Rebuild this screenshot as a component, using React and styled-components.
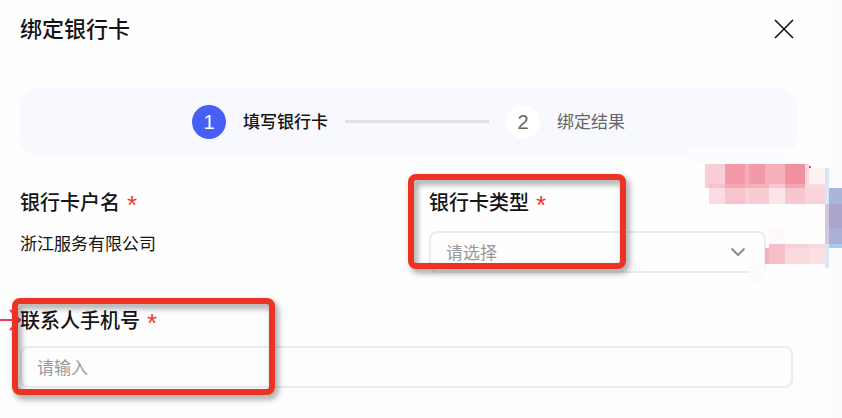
import styled, { createGlobalStyle } from "styled-components";

const mosaic = [
  // washed-out patch over the banner corner
  [689, 148, 96, 16, "#fbfcfe"],
  [785, 148, 24, 16, "#fdfdfe"],
  // upper row
  [705, 164, 20, 24, "#f9ced6"],
  [725, 164, 20, 20, "#f39aaa"],
  [745, 164, 4, 20, "#f5adb9"],
  [749, 164, 16, 20, "#f39aaa"],
  [765, 164, 20, 20, "#f5b1bc"],
  [785, 164, 20, 20, "#f28fa1"],
  [805, 164, 4, 20, "#fad6dc"],
  [809, 168, 16, 16, "#fef1f3"],
  [809, 166, 2, 2, "#d8506a"],
  [709, 184, 16, 4, "#f7c4cd"],
  [725, 184, 20, 4, "#f4a8b5"],
  [745, 184, 24, 4, "#f5b3be"],
  [769, 184, 16, 4, "#f8c6ce"],
  [785, 184, 20, 4, "#f4a6b4"],
  [805, 184, 20, 4, "#fad9de"],
  // middle row
  [709, 188, 16, 16, "#fbdbe1"],
  [725, 188, 20, 16, "#f7c3cd"],
  [745, 188, 4, 16, "#fad3da"],
  [749, 188, 20, 16, "#f9ccd4"],
  [769, 188, 16, 16, "#fce6e9"],
  [785, 188, 20, 16, "#f8c6cf"],
  [805, 188, 20, 16, "#f9d3da"],
  // lower row
  [769, 228, 16, 16, "#fdf9fa"],
  [765, 248, 4, 16, "#f4b1bd"],
  [769, 244, 16, 20, "#f6bec8"],
  [785, 244, 24, 4, "#f9cfd6"],
  [785, 248, 24, 16, "#fad9df"],
  [809, 244, 16, 4, "#fad7dd"],
  [809, 248, 16, 16, "#fbe0e4"],
  [749, 264, 16, 20, "#fcfcfc"],
  // blue column
  [825, 168, 4, 36, "#d6e8f8"],
  [825, 204, 4, 40, "#d4c6de"],
  [825, 244, 4, 24, "#d6e8f8"],
  [829, 188, 13, 16, "#aab5db"],
  [829, 204, 13, 24, "#a9a5cd"],
  [829, 228, 13, 16, "#a9b1da"],
  [829, 244, 13, 4, "#a9cbf0"],
];

export default function App() {
  return (
    <>
      <GlobalStyle />
      <Page>
        <Dialog>
          <Header>
            <Title>绑定银行卡</Title>
            <CloseButton type="button" aria-label="关闭">
              <svg width="20" height="20" viewBox="0 0 20 20">
                <path
                  d="M1 1L19 19M19 1L1 19"
                  fill="none"
                  stroke="currentColor"
                  strokeWidth="1.6"
                />
              </svg>
            </CloseButton>
          </Header>

          <Steps>
            <Step $active>
              <StepNumber $active>1</StepNumber>
              <StepText>填写银行卡</StepText>
            </Step>
            <StepLine aria-hidden="true" />
            <Step>
              <StepNumber>2</StepNumber>
              <StepText>绑定结果</StepText>
            </Step>
          </Steps>

          <Form>
            <Columns>
              <Field $gap={17}>
                <Label as="div">
                  银行卡户名 <Required>*</Required>
                </Label>
                <Value>浙江服务有限公司</Value>
              </Field>
              <Field $gap={17}>
                <Label htmlFor="cardType">
                  银行卡类型 <Required>*</Required>
                </Label>
                <SelectWrapper>
                  <Select id="cardType" defaultValue="">
                    <option value="">请选择</option>
                  </Select>
                  <Chevron viewBox="0 0 16 10">
                    <path
                      d="M1.5 1.5L8 8L14.5 1.5"
                      fill="none"
                      stroke="currentColor"
                      strokeWidth="2"
                    />
                  </Chevron>
                </SelectWrapper>
                <Highlight $top={-16} $left={-21} $width={218} $height={95} />
              </Field>
            </Columns>

            <Field $gap={14}>
              <Arrow viewBox="0 0 24 24">
                <path
                  d="M0 12H21M10 2L20 12L10 22"
                  fill="none"
                  stroke="#e8405f"
                  strokeWidth="2"
                />
              </Arrow>
              <Label htmlFor="phone">
                联系人手机号 <Required>*</Required>
              </Label>
              <Input id="phone" type="tel" placeholder="请输入" />
              <Highlight $top={-10} $left={-8} $width={263} $height={97} />
            </Field>
          </Form>
        </Dialog>
        <Mosaic viewBox="689 148 153 136" shapeRendering="crispEdges">
          {mosaic.map(([x, y, width, height, fill]) => (
            <rect
              key={`${x}-${y}`}
              x={x}
              y={y}
              width={width}
              height={height}
              fill={fill}
            />
          ))}
        </Mosaic>
      </Page>
    </>
  );
}

const GlobalStyle = createGlobalStyle`
  *,
  *::before,
  *::after {
    box-sizing: border-box;
  }

  body {
    background-color: #fafbfc;
    color: #141414;
    font-family: "Noto Sans CJK SC", sans-serif;
    margin: 0;
  }

  button,
  input,
  select {
    font-family: inherit;
  }
`;

const Page = styled.div`
  display: flex;
  min-height: 100vh;
  overflow: hidden;
  padding-right: 11px;
  position: relative;
`;

const Dialog = styled.main`
  background-color: #fefefe;
  flex: 1;
  padding: 12px 34px 24px 20px;
`;

const Header = styled.header`
  align-items: center;
  display: flex;
  justify-content: space-between;
  margin-bottom: 42px;
`;

const Title = styled.h1`
  font-size: 22px;
  font-weight: 500;
  line-height: 30px;
  margin: 0;
  padding-bottom: 4px;
`;

const CloseButton = styled.button`
  background: none;
  border: none;
  color: #141414;
  cursor: pointer;
  display: flex;
  padding: 2px 3px;
`;

const Steps = styled.div`
  align-items: center;
  background-color: #f7f9fe;
  border-radius: 16px;
  display: flex;
  gap: 17px;
  height: 67px;
  justify-content: center;
`;

const Step = styled.div`
  align-items: center;
  color: ${({ $active }) => ($active ? "#141414" : "#666")};
  display: flex;
  font-size: 17px;
  font-weight: ${({ $active }) => ($active ? 500 : 400)};
  gap: 17px;
`;

const StepNumber = styled.span`
  background-color: ${({ $active }) => ($active ? "#465ff6" : "#fff")};
  border-radius: 50%;
  color: ${({ $active }) => ($active ? "#fff" : "#666")};
  font-family: "Liberation Sans", sans-serif;
  font-size: 20px;
  height: 34px;
  line-height: 34px;
  text-align: center;
  width: 34px;
`;

const StepText = styled.span`
  line-height: 24px;
  padding-bottom: 2px;
`;

const StepLine = styled.div`
  background-color: #e1e2e6;
  height: 3px;
  width: 144px;
`;

const Form = styled.form`
  display: grid;
  gap: 35px;
  padding: 35px 4px 0 0;
`;

const Columns = styled.div`
  column-gap: 45px;
  display: grid;
  grid-template-columns: 1fr 1fr;
`;

const Field = styled.div`
  align-content: start;
  display: grid;
  gap: ${({ $gap }) => $gap}px;
  position: relative;
`;

const Label = styled.label`
  display: flex;
  font-size: 20px;
  font-weight: 500;
  gap: 7px;
  height: 24px;
  line-height: 24px;
`;

const Required = styled.span`
  color: #ee3a2c;
  font-family: "Liberation Sans", sans-serif;
  font-size: 26px;
  font-weight: 400;
  line-height: 30px;
`;

const Value = styled.div`
  font-size: 17px;
  line-height: 24px;
`;

const SelectWrapper = styled.div`
  margin-right: 27px;
  position: relative;
`;

const Select = styled.select`
  appearance: none;
  background: none;
  border: 2px solid #ebebf2;
  border-radius: 8px;
  color: #999;
  display: block;
  font-size: 17px;
  height: 42px;
  padding: 0 40px 2px 15px;
  width: 100%;
`;

const Chevron = styled.svg`
  color: #8c8c8c;
  height: 10px;
  pointer-events: none;
  position: absolute;
  right: 20px;
  top: 16px;
  width: 16px;
`;

const Input = styled.input`
  background: none;
  border: 2px solid #ebebf2;
  border-radius: 8px;
  font-size: 17px;
  height: 42px;
  padding: 0 15px 2px;
  width: 100%;

  &::placeholder {
    color: #999;
  }
`;

const Highlight = styled.div`
  border: 6px solid #ec3323;
  border-radius: 8px;
  filter: drop-shadow(3px 4px 3px rgba(0, 0, 0, 0.4));
  height: ${({ $height }) => $height}px;
  left: ${({ $left }) => $left}px;
  pointer-events: none;
  position: absolute;
  top: ${({ $top }) => $top}px;
  width: ${({ $width }) => $width}px;
`;

const Arrow = styled.svg`
  height: 24px;
  left: -20px;
  position: absolute;
  top: 0;
  width: 24px;
`;

const Mosaic = styled.svg`
  height: 136px;
  pointer-events: none;
  position: absolute;
  right: 0;
  top: 148px;
  width: 153px;
`;
